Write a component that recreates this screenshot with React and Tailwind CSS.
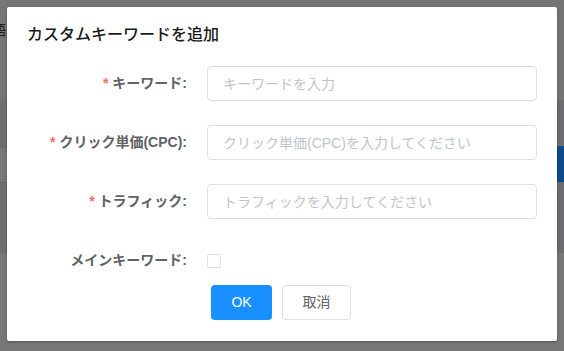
import React from "react";

const font = { fontFamily: '"Liberation Sans", "Noto Sans CJK JP", sans-serif' };

const Field = ({ label, placeholder, required }) => (
  <div className="flex items-center h-[35px] mb-[24px]">
    <label className="w-[180px] pr-[20px] text-right text-[14px] font-bold text-[#606266] shrink-0">
      {required && <span className="text-[#f56c6c] mr-[4px]">*</span>}
      {label}
    </label>
    <input
      type="text"
      placeholder={placeholder}
      className="flex-1 h-[35px] px-[15px] rounded-[4px] border border-[#dcdfe6] text-[14px] text-[#606266] placeholder:text-[#c0c4cc] outline-none"
    />
  </div>
);

const App = () => {
  return (
    <div className="relative w-[564px] h-[351px] overflow-hidden bg-[#757575]" style={font}>
      {/* page behind the dialog, dimmed */}
      <div className="flex flex-col pt-[22px]">
        <div className="h-[16px] text-[14px] leading-[16px] text-[#1f1f1f] -ml-[8px]">語</div>
        <div className="h-[62px]" />
        <div className="h-[47px] bg-[#6c6e71]" />
        <div className="h-[35px] bg-[#777777] border-t border-[#6a6a6a]" />
        <div className="h-[71px] bg-[#6c6e71] border-t border-[#666]" />
        <div className="h-[98px] bg-[#777777]" />
      </div>
      <div className="absolute right-0 top-[146px] w-[10px] h-[36px] rounded-l-[5px] bg-[#0e4b8b]" />

      {/* dialog */}
      <div className="absolute left-[7px] top-[7px] w-[550px] h-[334px] bg-white rounded-[2px] shadow-[0_1px_3px_rgba(0,0,0,0.3)] px-[20px] pt-[16px]">
        <h2 className="text-[16px] leading-[24px] font-medium text-[#1a1a1a] mb-[19px]">
          カスタムキーワードを追加
        </h2>
        <Field label="キーワード:" placeholder="キーワードを入力" required />
        <Field label="クリック単価(CPC):" placeholder="クリック単価(CPC)を入力してください" required />
        <Field label="トラフィック:" placeholder="トラフィックを入力してください" required />
        <div className="flex items-center h-[35px]">
          <label className="w-[180px] pr-[20px] text-right text-[14px] font-bold text-[#606266] shrink-0">
            メインキーワード:
          </label>
          <span className="w-[14px] h-[14px] rounded-[2px] border border-[#dcdfe6] bg-white" />
        </div>
        <div className="flex gap-[10px] pl-[184px] mt-[7px]">
          <button className="w-[61px] h-[35px] rounded-[4px] bg-[#1890ff] text-white text-[14px]">
            OK
          </button>
          <button className="w-[69px] h-[35px] rounded-[4px] border border-[#dcdfe6] bg-white text-[#606266] text-[14px]">
            取消
          </button>
        </div>
      </div>
    </div>
  );
};

export default App;
